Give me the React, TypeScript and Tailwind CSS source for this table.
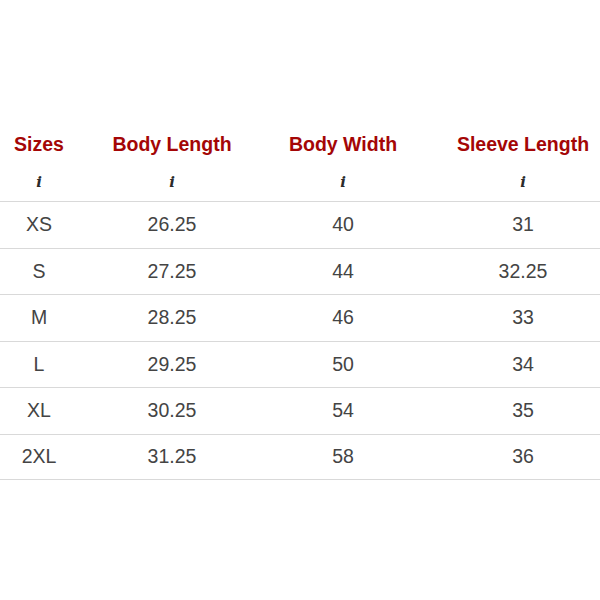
const rows = [
  ['XS', '26.25', '40', '31'],
  ['S', '27.25', '44', '32.25'],
  ['M', '28.25', '46', '33'],
  ['L', '29.25', '50', '34'],
  ['XL', '30.25', '54', '35'],
  ['2XL', '31.25', '58', '36'],
];

const headers = ['Sizes', 'Body Length', 'Body Width', 'Sleeve Length'];
const cols = ['w-[78px]', 'w-[188px]', 'w-[154px]', 'w-[180px] pl-[26px]'];

export default function App() {
  return (
    <div className="w-[600px] h-[600px] bg-white pt-[125px] font-['Liberation_Sans',Arial,sans-serif]">
      <div className="flex h-[39px] items-center">
        {headers.map((h, i) => (
          <div key={h} className={`${cols[i]} shrink-0 text-center text-[19.5px] font-bold text-[#a40606] whitespace-nowrap`}>
            {h}
          </div>
        ))}
      </div>
      <div className="flex h-[37px] items-center">
        {headers.map((h, i) => (
          <div key={h} className={`${cols[i]} shrink-0 text-center text-[15px] font-bold italic text-[#2a2a2a] font-['DejaVu_Serif',serif]`}>
            i
          </div>
        ))}
      </div>
      {rows.map((r, ri) => (
        <div
          key={r[0]}
          className={`flex h-[46.5px] items-center border-t border-[#d9d9d9] ${ri === rows.length - 1 ? 'border-b' : ''}`}
        >
          {r.map((c, i) => (
            <div key={i} className={`${cols[i]} shrink-0 text-center text-[19.5px] text-[#444]`}>
              {c}
            </div>
          ))}
        </div>
      ))}
    </div>
  );
}
